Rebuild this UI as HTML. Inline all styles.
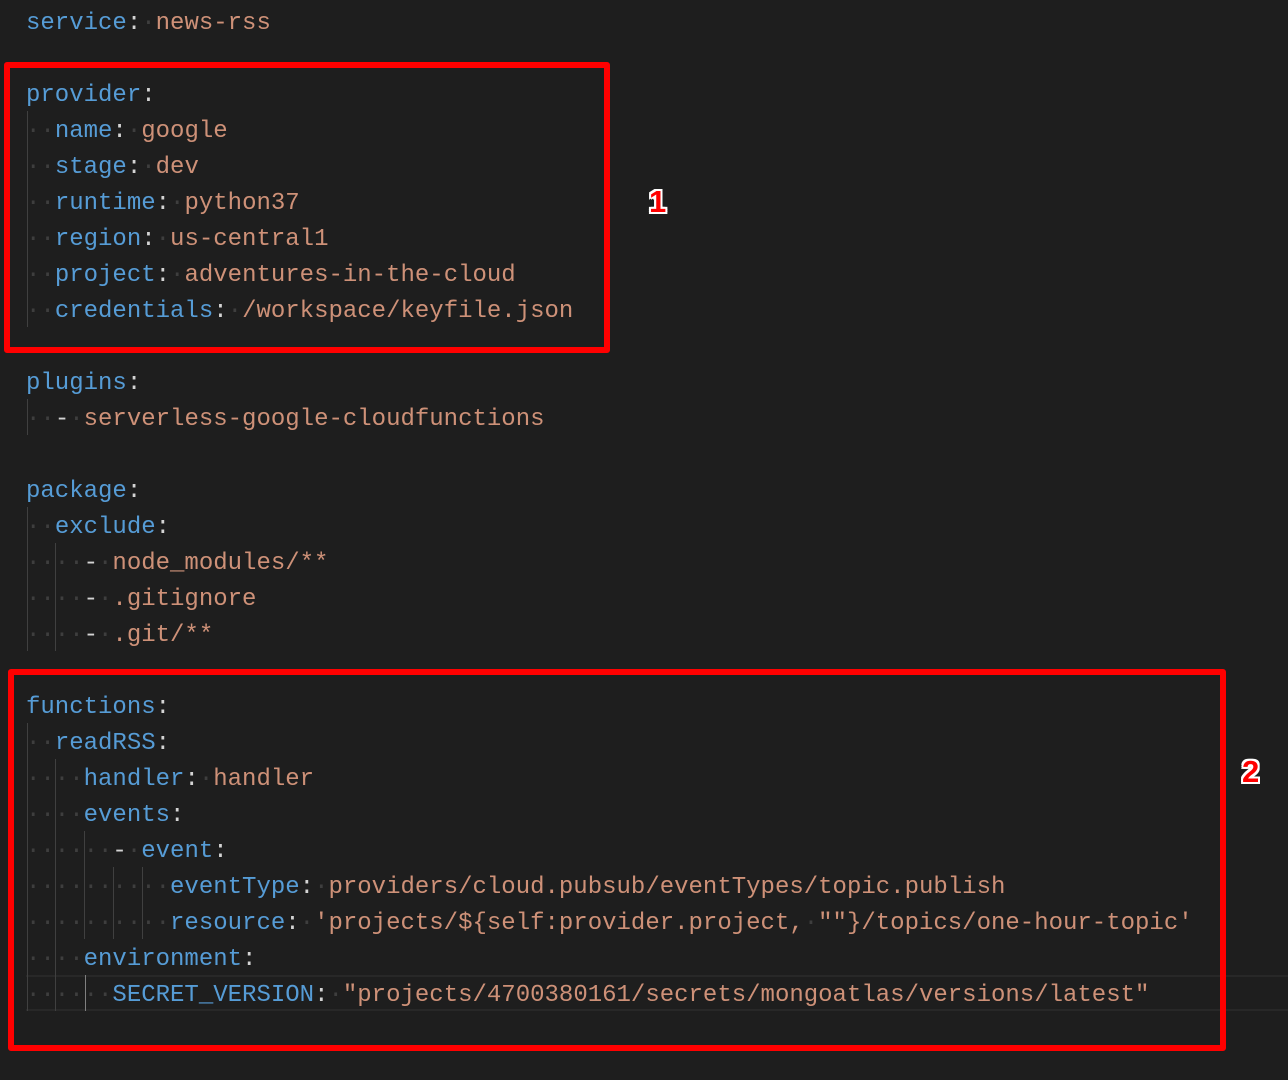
<!DOCTYPE html>
<html><head><meta charset="utf-8"><style>
html,body{margin:0;padding:0;background:#1e1e1e;width:1288px;height:1080px;overflow:hidden;position:relative}
.l{position:absolute;left:26px;height:36px;line-height:36px;margin-top:3px;font-family:"Liberation Mono",monospace;font-size:24px;white-space:pre;color:#d4d4d4}
.k{color:#569cd6}.v{color:#ce9178}.d{color:#3e3e3e}
.g{position:absolute;width:1px;background:#404040}
.box{position:absolute;border:6px solid #ff0000;border-radius:3px}
.n{position:absolute;font-family:"Liberation Sans",sans-serif;font-weight:bold;font-size:31px;color:#ff0000;
text-shadow:-2px -2px 0 #fff,2px -2px 0 #fff,-2px 2px 0 #fff,2px 2px 0 #fff,0 2px 0 #fff,0 -2px 0 #fff,2px 0 0 #fff,-2px 0 0 #fff}
.cur{position:absolute;left:26px;top:975px;width:1262px;height:36px;border-top:2px solid #282828;border-bottom:2px solid #282828;box-sizing:border-box}
</style></head><body>
<div class="cur"></div>
<div class="l" style="top:3px"><span class="k">service</span>:<span class="d">·</span><span class="v">news-rss</span></div>
<div class="l" style="top:75px"><span class="k">provider</span>:</div>
<div class="l" style="top:111px"><span class="d">··</span><span class="k">name</span>:<span class="d">·</span><span class="v">google</span></div>
<div class="l" style="top:147px"><span class="d">··</span><span class="k">stage</span>:<span class="d">·</span><span class="v">dev</span></div>
<div class="l" style="top:183px"><span class="d">··</span><span class="k">runtime</span>:<span class="d">·</span><span class="v">python37</span></div>
<div class="l" style="top:219px"><span class="d">··</span><span class="k">region</span>:<span class="d">·</span><span class="v">us-central1</span></div>
<div class="l" style="top:255px"><span class="d">··</span><span class="k">project</span>:<span class="d">·</span><span class="v">adventures-in-the-cloud</span></div>
<div class="l" style="top:291px"><span class="d">··</span><span class="k">credentials</span>:<span class="d">·</span><span class="v">/workspace/keyfile.json</span></div>
<div class="l" style="top:363px"><span class="k">plugins</span>:</div>
<div class="l" style="top:399px"><span class="d">··</span>-<span class="d">·</span><span class="v">serverless-google-cloudfunctions</span></div>
<div class="l" style="top:471px"><span class="k">package</span>:</div>
<div class="l" style="top:507px"><span class="d">··</span><span class="k">exclude</span>:</div>
<div class="l" style="top:543px"><span class="d">····</span>-<span class="d">·</span><span class="v">node_modules/**</span></div>
<div class="l" style="top:579px"><span class="d">····</span>-<span class="d">·</span><span class="v">.gitignore</span></div>
<div class="l" style="top:615px"><span class="d">····</span>-<span class="d">·</span><span class="v">.git/**</span></div>
<div class="l" style="top:687px"><span class="k">functions</span>:</div>
<div class="l" style="top:723px"><span class="d">··</span><span class="k">readRSS</span>:</div>
<div class="l" style="top:759px"><span class="d">····</span><span class="k">handler</span>:<span class="d">·</span><span class="v">handler</span></div>
<div class="l" style="top:795px"><span class="d">····</span><span class="k">events</span>:</div>
<div class="l" style="top:831px"><span class="d">······</span>-<span class="d">·</span><span class="k">event</span>:</div>
<div class="l" style="top:867px"><span class="d">··········</span><span class="k">eventType</span>:<span class="d">·</span><span class="v">providers/cloud.pubsub/eventTypes/topic.publish</span></div>
<div class="l" style="top:903px"><span class="d">··········</span><span class="k">resource</span>:<span class="d">·</span><span class="v">'projects/${self:provider.project,<span class="d">·</span>""}/topics/one-hour-topic'</span></div>
<div class="l" style="top:939px"><span class="d">····</span><span class="k">environment</span>:</div>
<div class="l" style="top:975px"><span class="d">······</span><span class="k">SECRET_VERSION</span>:<span class="d">·</span><span class="v">"projects/4700380161/secrets/mongoatlas/versions/latest"</span></div>

<div class="g" style="left:27px;top:111px;height:216px"></div>
<div class="g" style="left:27px;top:399px;height:36px"></div>
<div class="g" style="left:27px;top:507px;height:144px"></div>
<div class="g" style="left:27px;top:723px;height:288px"></div>
<div class="g" style="left:55px;top:543px;height:108px"></div>
<div class="g" style="left:55px;top:759px;height:252px"></div>
<div class="g" style="left:84px;top:831px;height:108px"></div>
<div class="g" style="left:85px;top:975px;height:36px;background:#808080"></div>
<div class="g" style="left:113px;top:867px;height:72px"></div>
<div class="g" style="left:142px;top:867px;height:72px"></div>

<div class="box" style="left:4px;top:62px;width:594px;height:279px"></div>
<div class="box" style="left:8px;top:669px;width:1206px;height:370px"></div>
<div class="n" style="left:649px;top:184px">1</div>
<div class="n" style="left:1242px;top:754px">2</div>
</body></html>
